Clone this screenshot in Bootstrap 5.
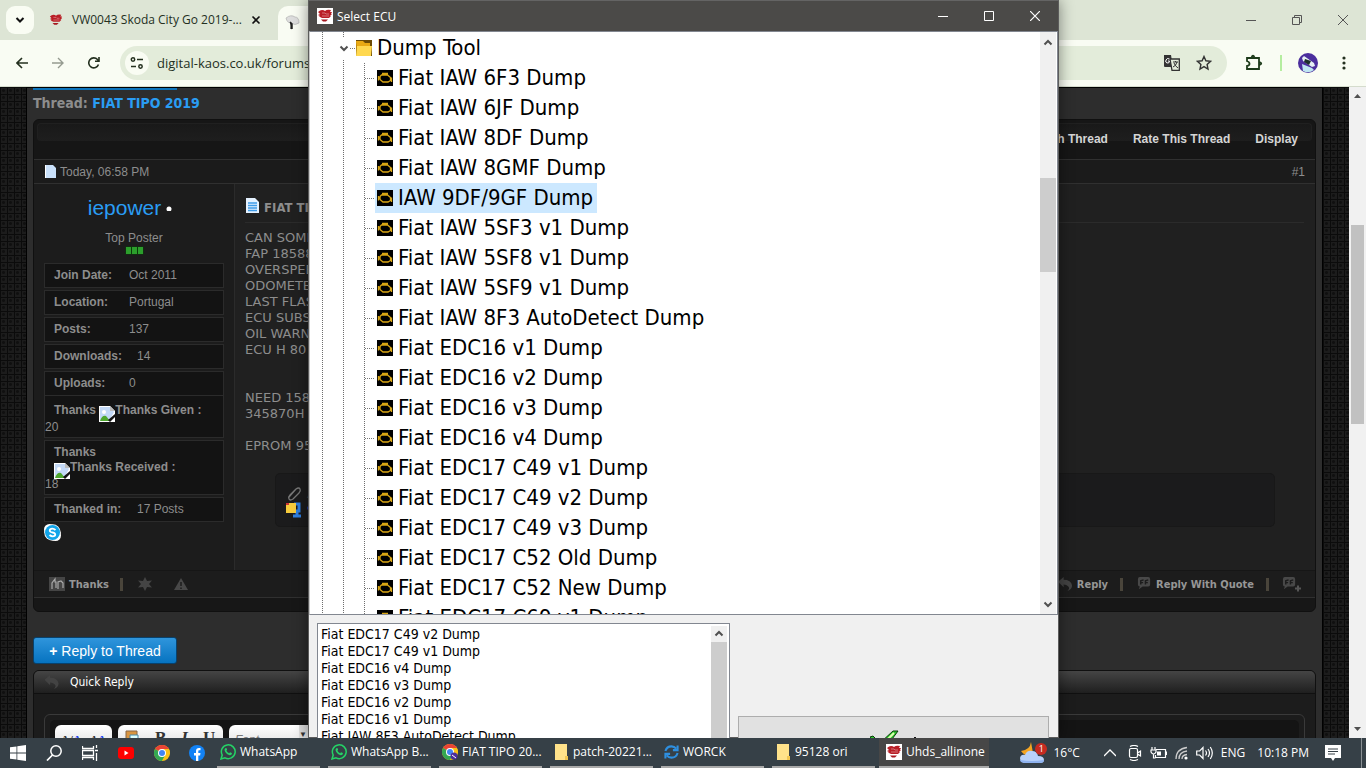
<!DOCTYPE html>
<html lang="en">
<head>
<meta charset="utf-8">
<meta name="viewport" content="width=device-width, initial-scale=1">
<title>FIAT TIPO 2019</title>
<link rel="stylesheet" href="https://cdn.jsdelivr.net/npm/bootstrap@5.3.0/dist/css/bootstrap.min.css">
<style>
:root{--ui:"Open Sans","Noto Sans",sans-serif;--tahoma:"DejaVu Sans Condensed","Noto Sans",sans-serif;--arial:"Liberation Sans",Arial,sans-serif}
body{height:100vh;overflow:hidden;font-family:var(--arial);font-size:12px;line-height:16px;color:#8d8d8d;background:#2e2e2e}
button{border:0;background:none;padding:0;color:inherit;font:inherit}
svg{flex:none;display:block}
a{text-decoration:none;color:inherit}
.desk{min-height:0}
/* browser */
.tabs{height:40px;background:#dde5d5;color:#24301f;font-family:var(--ui)}
.tab-menu{width:28px;height:28px;margin-left:6px;border-radius:9px;background:#f9fcf3}
.tab-a{width:240px;padding:0 12px 0 15px;gap:9px}
.tab-a span{width:170px;white-space:nowrap}
.tab-b{width:240px;height:34px;margin-left:4px;padding-left:7px;border-radius:10px 10px 0 0;background:#f9fcf3}
.win-ctl{width:46px;height:40px}
.bar{height:47px;background:#f9fcf3;color:#24301f;border-bottom:1px solid #d5dccd}
.omni{height:34px;border-radius:17px;background:#e3ecda;margin-left:20px;padding:0 15px 0 5px}
.omni input{border:0;background:none;outline:0;font:13px var(--ui);color:#24301f;padding:0;margin-left:8px}
.tune{width:24px;height:24px;border-radius:50%;background:#f9fcf3}
/* forum page */
.view{background:#121212;overflow:hidden}
.weave{background-color:#1c1c1c;background-image:linear-gradient(#0b0b0b 1px,transparent 1px),linear-gradient(90deg,#0b0b0b 1px,transparent 1px),radial-gradient(#101010 1px,transparent 2px);background-size:7px 7px;padding:0 26px}
.sheet{background:#2d2d2d;border:solid #000;border-width:1px 1px 0;height:100%;padding:0 6px}
.top-btn{width:144px;height:2px;background:#0d73bb}
.thread-h{font:bold 14px/18px var(--tahoma);margin:4px 0 7px}
.thread-h a,.blue{color:#2a9df4}
.panel{border:1px solid #101010;border-radius:6px;background:#171717;overflow:hidden}
.tools{height:40px;padding:3px 3px 0;background:#161616;border-bottom:1px solid #303030}
.tools-in{height:18px;line-height:30px;border-radius:4px;border:1px solid #202020;border-bottom:0;background:linear-gradient(#191919,#1e1e1e);gap:25px;padding-right:13px;color:#d5d5d5;font-weight:bold}
.date{height:24px;background:#1b1b1b;border-bottom:1px solid #303030;padding:0 10px 0 11px}
.post{height:386px;background:#1c1c1c}
.who{width:201px;border-right:1px solid #2b2b2b;padding:12px 10px 0}
.stat{border:1px solid #2b2b2b;background:#131313;height:25px;margin-bottom:2px;padding-left:9px;line-height:23px}
.stat b{display:inline-block;width:75px}
.stat.wide b{width:83px}
.stat.tall{height:auto;line-height:16px;padding:7px 0 2px}
.stat.tall b{width:auto;display:block;padding-left:9px;line-height:15px}
.stat.tall svg{display:inline-block;vertical-align:-5px;margin-bottom:-3px}
.msg{flex:1;background:#202020;padding:14px 11px 0 10px;font:13px/16px "DejaVu Sans",sans-serif;min-width:0}
.msg h2{font:bold 13px/20px var(--tahoma);margin:0 0 7px;padding-bottom:4px;border-bottom:1px solid #2b2b2b;white-space:nowrap}
.attach{height:54px;margin:19px 29px 0 30px;border:1px solid #181818;border-radius:5px;background:#1b1b1c;padding:12px 10px;white-space:nowrap}
.acts{height:28px;border-top:1px solid #161616;border-bottom:1px solid #303030;background:#1c1c1c;font:bold 11px/15px var(--tahoma);padding:0 13px 0 15px;color:#969696}
.sep{width:3px;height:13px;background:#4a453b}
.reply{width:144px;height:27px;margin:25px 0 6px;border:1px solid #07426e;border-radius:3px;background:linear-gradient(#2f95dc,#0673c0);color:#fff;font-size:14px}
.quick-h{height:23px;background:linear-gradient(#454545,#1f1f1f);border-bottom:1px solid #101010;color:#fff;font:12px/22px var(--tahoma)}
.quick{background:#1c1c1c;padding:20px 10px 0}
.editor{height:120px;border:1px solid #3a3a3a;border-radius:6px;padding:5px}
.editor>div{background:#141414;height:110px;border-radius:5px;padding:5px;gap:6px}
.grp{height:30px;border-radius:6px;background:linear-gradient(#fff,#d5d5d5);font-family:"Liberation Serif",serif;color:#333}
.grp input{width:70px;border:0;background:none;padding:0 0 0 6px;font:italic 12px var(--arial)}
.grp input::placeholder{color:#777}
.rail{width:17px;background:#f1f1f1}
.rail i{display:block;background:#c1c1c1;margin:0 2px}
/* dialog */
.dlg{position:absolute;left:308px;top:0;width:751px;height:100%;border:1px solid #5c5c5c;border-top-color:#646464;background:#f0f0f0;box-shadow:0 0 14px rgba(0,0,0,.45);color:#000;font-family:var(--tahoma)}
.cap{height:30px;background:#4b4a48;color:#fff;font:12px var(--ui)}
.cap button{width:46px;height:30px}
.tree{height:584px;border:1px solid #828790;border-left-color:#c8c8c8;background:#fff;padding-right:1px;overflow:hidden}
.guide{background:repeating-linear-gradient(#6e6e6e 0 1px,transparent 1px 2px) 6px 0/1px 100% no-repeat}
.twist{width:13px;height:22px;background:#fff}
.lead-dots{width:10px;height:1px;background:repeating-linear-gradient(90deg,#777 0 1px,transparent 1px 2px)}
.leaf,.branch{height:30px;font-size:22px;line-height:30px;white-space:nowrap}
.leaf span{display:flex;align-items:center;padding:0 4px 0 2px;gap:5px}
.leaf.sel span{background:#cce8ff}
.sb{width:16px;background:#f0f0f0}
.sb i{display:block;background:#cdcdcd}
.low{padding:8px 9px 0 8px;gap:8px}
.recent{width:413px;height:160px;border:1px solid #828790;background:#fff;padding:2px 2px 0 3px;font-size:14px;line-height:17px}
.ok{flex:1;height:56px;margin-top:93px;border:1px solid #adadad;background:#e1e1e1}
/* taskbar */
.task{height:30px;background:#364047;color:#fff;font:12px/28px var(--ui);position:relative}
.pin{width:36px;height:30px}
.app{width:103px;height:30px;margin-right:8px;padding-left:3px;gap:4px;border-bottom:2px solid #a9a9a9;white-space:nowrap}
.app.on{width:110px;background:#474747;padding-left:7px;margin:0 0 0 -4px}
.tray{gap:8px;padding-right:4px}
.tray .badge-n{left:16px;top:2px;width:12px;height:12px;border-radius:50%;background:#c62b20;font-size:9px;line-height:12px;text-align:center}
</style>
</head>
<body class="d-flex flex-column">
<svg width="0" height="0" class="position-absolute">
<symbol id="ecu" viewBox="0 0 16 16"><rect width="16" height="16" fill="#000"/><path d="M5 3.500h6M8 3.500v1.500M4.500 5h6l3 2.500v3L11 12H6l-3-2.500V6.500zM1.500 6v4.500M1.500 8H3M14.500 7.500V12" fill="none" stroke="#d9a614" stroke-width="1.300"/></symbol>
<symbol id="fan" viewBox="0 0 16 16"><path d="M1 4q2-2 4-2 2 0 3 1 2-2 6-1l-1 2h2l-1 2h1l-2 2h1l-2 2H5L3 9H2l1-1-2-1h2L1 6h2z" fill="#b91e26"/><path d="M4 11.500h7l-2 2H6z" fill="#a51820"/><path d="M5 5h3l1 1h3M5 8h7" fill="none" stroke="#f3c9c9" stroke-width=".5"/></symbol>
<symbol id="up" viewBox="0 0 10 10"><path d="M1.500 6.500L5 3l3.500 3.500" fill="none" stroke="#505050" stroke-width="2"/></symbol>
<symbol id="down" viewBox="0 0 10 10"><path d="M1.500 3.500L5 7l3.500-3.500" fill="none" stroke="#505050" stroke-width="2"/></symbol>
<symbol id="wa" viewBox="0 0 16 16"><path d="M1 15l1.200-4A6.900 6.900 0 1 1 5 13.800z" fill="none" stroke="#25d366" stroke-width="1.500"/><path d="M5.300 4.300q1-.8 1.400.2l.4 1q0 .4-.7 1.200 1 1.700 2.800 2.500l.8-.9q1.500.4 2 1-.2 2-2.200 1.900Q5.300 10 4.500 6q.1-1 .8-1.700" fill="#25d366"/></symbol>
<symbol id="chr" viewBox="0 0 16 16"><circle cx="8" cy="8" r="8" fill="#fbc116"/><path d="M8 8L1.070 4A8 8 0 0 1 14.930 4z" fill="#ea4335"/><path d="M8 8L1.070 4A8 8 0 0 0 8 16l3.500-6z" fill="#34a853"/><path d="M8 4h6.900q1.400 2.500 1 5L8 16l3.500-6z" fill="#fbc116"/><circle cx="8" cy="8" r="4" fill="#fff"/><circle cx="8" cy="8" r="3" fill="#4285f4"/></symbol>
<symbol id="fold" viewBox="0 0 16 16"><path d="M2 0h12v13l-2 3H2z" fill="#ffe28a"/><path d="M12 12h3v4h-3z" fill="#f1c550"/></symbol>
<symbol id="broken" viewBox="0 0 16 16"><path d="M0 0h11l5 5v11H0z" fill="#fff"/><path d="M1 1h10l4 5-5 9H1z" fill="#c3d9f7"/><path d="M1 15q2-6 6-5l4 5z" fill="#4ea72e"/><path d="M11 0v5h5z" fill="#bbb"/><path d="M9 14l7-6v3l-5 5z" fill="#131313"/><circle cx="5" cy="6" r="2" fill="#fff"/></symbol>
<symbol id="arrow" viewBox="0 0 16 16"><path d="M0 5l6-5v3q8 0 9 6 0 4-5 6 3-3 1-5-2-2-5-2v3z" fill="#434343"/></symbol>
<symbol id="quote" viewBox="0 0 16 16"><path d="M3 0h9q2 0 2 2v6q0 2-2 2H6l-4 3 1-3Q1 10 1 8V2q0-2 2-2z" fill="#484848"/><path d="M4 8V4l3-1M9 8V4l3-1M3.500 6h3M8.500 6h3" stroke="#1c1c1c" stroke-width="1.500" fill="none"/></symbol>
</svg>

<div class="desk flex-grow-1 position-relative overflow-hidden d-flex flex-column">
<header>
 <div class="tabs d-flex align-items-center">
  <button class="tab-menu d-grid" aria-label="Search tabs" style="place-items:center"><svg width="10" height="10" viewBox="0 0 10 10"><path d="M1.500 3L5 6.500 8.500 3" fill="none" stroke="#111" stroke-width="2"/></svg></button>
  <div class="tab-a d-flex align-items-center"><svg width="14" height="14"><use href="#fan"/></svg><span>VW0043 Skoda City Go 2019-...</span><button aria-label="Close tab"><svg width="10" height="10" viewBox="0 0 10 10"><path d="M1.500 1.500l7 7m0-7l-7 7" stroke="#111" stroke-width="1.600"/></svg></button></div>
  <div class="tab-b align-self-end d-flex align-items-center"><svg width="16" height="16" viewBox="0 0 16 16"><path d="M1 3Q6-1 10 2q4 0 4 6-4 3-8 0Q2 8 1 3z" fill="#ddd" stroke="#aaa" stroke-width=".6"/><path d="M5 7l2 2-1 5M7 9v5" stroke="#222" stroke-width="1.500"/></svg></div>
  <div class="ms-auto d-flex">
   <button class="win-ctl" aria-label="Minimise"><svg class="m-auto" width="10" height="10"><path d="M0 5.500h10" stroke="#555"/></svg></button>
   <button class="win-ctl" aria-label="Restore"><svg class="m-auto" width="10" height="10" viewBox="0 0 10 10"><path d="M.5 2.500h7v7h-7zM2.500 2.500v-2h7v7h-2" fill="none" stroke="#555"/></svg></button>
   <button class="win-ctl" aria-label="Close"><svg class="m-auto" width="10" height="10"><path d="M0 0l10 10M10 0L0 10" stroke="#555"/></svg></button>
  </div>
 </div>
 <div class="bar d-flex align-items-center">
  <button class="ms-3" aria-label="Back"><svg width="12" height="12" viewBox="0 0 12 12"><path d="M12 6H1M6 1L1 6l5 5" fill="none" stroke="#24301f" stroke-width="1.600"/></svg></button>
  <button class="ms-4" aria-label="Forward"><svg width="12" height="12" viewBox="0 0 12 12"><path d="M0 6h11M6 1l5 5-5 5" fill="none" stroke="#959b90" stroke-width="1.400"/></svg></button>
  <button class="ms-4" aria-label="Reload"><svg width="12" height="12" viewBox="0 0 12 12"><path d="M10.500 7.500A5 5 0 1 1 9.500 2.500l1.500 1.500M11 0v4.200H7" fill="none" stroke="#24301f" stroke-width="1.600"/></svg></button>
  <div class="omni flex-grow-1 d-flex align-items-center">
   <span class="tune d-grid" style="place-items:center"><svg width="14" height="12" viewBox="0 0 14 12"><path d="M7 2.500h6M1 9.500h5" stroke="#24301f" stroke-width="1.500"/><g fill="none" stroke="#24301f" stroke-width="1.500"><circle cx="3" cy="2.500" r="1.700"/><circle cx="10.500" cy="9.500" r="1.700"/></g></svg></span>
   <input class="flex-grow-1" aria-label="Address" value="digital-kaos.co.uk/forums">
   <button class="me-3" aria-label="Translate"><svg width="16" height="16" viewBox="0 0 16 16"><path d="M0 0h7l2 12H1q-1 0-1-1z" fill="#333"/><path d="M6 4h9.300v11.300H8z" fill="#e3ecda" stroke="#333" stroke-width="1.300"/><path d="M9 7h5M11.500 6v1M13 7q-1 4-4 5M10 8q1 3 4 5" stroke="#333" fill="none"/><path d="M5.500 4Q3 2.500 2 5t1 3q2.500.5 2.500-2H4" stroke="#fff" fill="none"/></svg></button>
   <button aria-label="Bookmark"><svg width="16" height="16" viewBox="0 0 16 16"><path d="M8 1.500l1.900 4.300 4.600.5-3.400 3.100.9 4.600-4-2.400-4 2.400.9-4.600L1.500 6.300l4.600-.5z" fill="none" stroke="#333" stroke-width="1.400"/></svg></button>
  </div>
  <button aria-label="Extensions" style="margin-left:18px"><svg width="18" height="18" viewBox="0 0 18 18"><path d="M2 4h12v11H2v-3q2.500-.5 2.500-2.300T2 7zM6.500 3.500Q8 0 9.500 3.500M14.500 8Q18 9.500 14.500 11" fill="none" stroke="#1d3b1a" stroke-width="1.800"/></svg></button>
  <span style="width:2px;height:16px;background:#b5eda0;margin-left:17px"></span>
  <button aria-label="Profile" style="margin-left:16px"><svg width="20" height="20" viewBox="0 0 20 20"><circle cx="10" cy="10" r="10" fill="#4b2e9d"/><path d="M4 5l2-2 10 7 1 3-3 1-9-6z" fill="#e6eff5"/><path d="M7 6l6 2-2 4-5-3z" fill="#1d2f2b"/><path d="M4 11l10 4 2 2a10 10 0 0 1-11 1z" fill="#bfe6f2"/></svg></button>
  <button aria-label="Menu" style="margin:0 20px 0 24px"><svg width="4" height="16" viewBox="0 0 4 16" fill="#24301f"><circle cx="2" cy="3" r="1.600"/><circle cx="2" cy="8" r="1.600"/><circle cx="2" cy="13" r="1.600"/></svg></button>
 </div>
</header>

<div class="view d-flex flex-grow-1">
 <div class="weave flex-grow-1"><main class="sheet">
  <div class="top-btn"></div>
  <h1 class="thread-h">Thread: <a href="#">FIAT TIPO 2019</a></h1>
  <section class="panel">
   <div class="tools"><nav class="tools-in d-flex justify-content-end"><a href="#">Search Thread</a><a href="#">Rate This Thread</a><a href="#">Display</a></nav></div>
   <div class="date d-flex align-items-center justify-content-between"><span class="d-flex align-items-center"><svg class="me-1" width="11" height="13" viewBox="0 0 11 13"><path d="M0 0h8l3 3v10H0z" fill="#c9e0fa"/><path d="M0 0h1v13H0z" fill="#fff"/></svg>Today, 06:58 PM</span><a href="#">#1</a></div>
   <article class="post d-flex">
    <aside class="who">
     <div class="d-flex align-items-center justify-content-center" style="gap:5px;padding-right:8px"><a href="#" class="blue" style="font-size:21px;line-height:24px">iepower</a><svg width="6" height="6"><circle cx="3" cy="4" r="2.500" fill="#fff"/></svg></div>
     <div class="text-center" style="margin-top:10px">Top Poster</div>
     <div class="d-flex justify-content-center" style="height:17px;padding-bottom:8px"><svg width="19" height="9"><path d="M.5.5h18v8H.5z" fill="#0b3a0b"/><path d="M1 1h5v7H1zM7 1h5v7H7zM13 1h5v7h-5z" fill="#2c9f2c"/></svg></div>
     <div class="stat">&#8203;<b>Join Date:</b>Oct 2011</div>
     <div class="stat"><b>Location:</b>Portugal</div>
     <div class="stat"><b>Posts:</b>137</div>
     <div class="stat wide"><b>Downloads:</b>14</div>
     <div class="stat"><b>Uploads:</b>0</div>
     <div class="stat tall" style="margin-top:-3px"><b>Thanks <svg width="16" height="16"><use href="#broken"/></svg>Thanks Given :</b>20</div>
     <div class="stat tall" style="padding-top:4px"><b>Thanks<br><svg width="16" height="16"><use href="#broken"/></svg>Thanks Received :</b>18</div>
     <div class="stat wide"><b>Thanked in:</b>17 Posts</div>
     <svg width="17" height="17" viewBox="0 0 17 17"><circle cx="5.500" cy="5.500" r="5.500" fill="#fff"/><circle cx="11.500" cy="11.500" r="5.500" fill="#fff"/><circle cx="8.500" cy="8.500" r="8.300" fill="#fff"/><circle cx="8.500" cy="8.500" r="7.500" fill="#12a5ea"/><path d="M11.500 6Q8.500 3.500 6 5.500 5 8 8.500 8.500q3.500.8 2.500 3-2.500 2-5.500-.5" fill="none" stroke="#fff" stroke-width="1.900"/></svg>
    </aside>
    <div class="msg">
     <h2><svg class="d-inline-block" width="15" height="16" viewBox="0 0 15 16" style="vertical-align:-2px"><path d="M1 0h9l4 4v11H1z" fill="#e4f1ff"/><path d="M3 5h9M3 7.500h9M3 10h9M3 12.500h9" stroke="#3d9be8" stroke-width="1.400"/></svg> FIAT TIPO 2019</h2>
     CAN SOME<br>FAP 18588<br>OVERSPEE<br>ODOMETER<br>LAST FLASH<br>ECU SUBS<br>OIL WARN<br>ECU H 80<br><br><br>NEED 158<br>345870H<br><br>EPROM 95
     <div class="attach"><div class="d-flex"><svg width="17" height="16" viewBox="0 0 17 16"><path d="M3 11l7-8q3-2 4 0t-1 4l-6 6q-3 2-4 0t1-4l5-5" fill="none" stroke="#777" stroke-width="1.300"/></svg><span class="ms-1" style="color:#444">Attached</span></div><div class="d-flex"><svg width="17" height="16" viewBox="0 0 17 16"><path d="M8 2h5v7h-2v5M7 14h8" fill="none" stroke="#2f7fe0" stroke-width="3"/><path d="M0 1h10v10H0z" fill="#f6cb3c"/><path d="M0 1h3v2H0z" fill="#c33"/></svg><span class="blue ms-1">95128</span></div></div>
    </div>
   </article>
   <div class="acts d-flex align-items-center">
    <a href="#" class="d-flex"><svg class="me-1" width="16" height="14" viewBox="0 0 16 14"><rect width="16" height="14" fill="#454545"/><path d="M3 12V6l3-4v3h1v6M9 12V5l3-1 2 2v5" fill="none" stroke="#aaa" stroke-width="1.200"/></svg>Thanks</a><span class="sep" style="margin:0 15px 0 11px"></span>
    <svg width="14" height="14" viewBox="0 0 14 14"><path d="M7 0l2 4 5-.5L11 7l3 3.500L9 10l-2 4-2-4-5 .5L3 7 0 3.500 5 4z" fill="#444"/></svg>
    <svg style="margin-left:22px" width="14" height="13" viewBox="0 0 14 13"><path d="M7 0l7 12H0z" fill="#484848"/><path d="M7 4v4M7 9.500V11" stroke="#1c1c1c" stroke-width="1.500"/></svg>
    <a href="#" class="d-flex ms-auto"><svg class="me-1" width="15" height="15"><use href="#arrow"/></svg>Reply</a><span class="sep" style="margin:0 14px 0 12px"></span>
    <a href="#" class="d-flex"><svg class="me-1" width="15" height="15"><use href="#quote"/></svg>Reply With Quote</a><span class="sep" style="margin:0 13px 0 12px"></span>
    <svg width="20" height="15" viewBox="0 0 20 15"><use href="#quote" width="15" height="15"/><path d="M13 11.500h6M16 8.500v6" stroke="#555" stroke-width="2"/></svg>
   </div>
   <div style="height:13px"></div>
  </section>
  <button class="reply d-block"><b>+</b> Reply to Thread</button>
  <section class="panel">
   <div class="quick-h d-flex align-items-center"><svg class="ms-2 me-2" width="20" height="15" viewBox="0 0 16 16"><use href="#arrow"/></svg>Quick Reply</div>
   <div class="quick"><div class="editor"><div class="d-flex">
    <span class="grp d-flex justify-content-center gap-2 fw-bold" style="width:57px"><button>A/<span style="color:#24e">A</span></button><button><i>A</i><span style="color:#24e">A</span></button></span>
    <span class="grp d-flex align-items-start" style="width:105px;font:bold 17px/26px 'Liberation Serif',serif;padding-left:7px;gap:15px"><svg class="mt-1" width="15" height="16" viewBox="0 0 15 16"><path d="M1 2h11v13H1z" fill="#d99540" stroke="#864"/><path d="M5 6h8v9H5z" fill="#dff" stroke="#48a"/></svg><button>B</button><button><i>I</i></button><button>U</button></span>
    <span class="grp d-flex"><input placeholder="Font" aria-label="Font"><span style="width:30px;background:#ddd;font-size:8px;line-height:20px">&#9660;</span></span>
   </div></div></div>
  </section>
 </main></div>
 <div class="rail d-flex flex-column"><svg class="mx-auto" width="9" height="17"><path d="M1 11h7L4.500 7z" fill="#505050"/></svg><i style="height:199px;margin-top:121px"></i><svg class="mx-auto mt-auto" width="9" height="17"><path d="M1 6h7l-3.500 4z" fill="#505050"/></svg></div>
</div>

<section class="dlg d-flex flex-column" role="dialog" aria-label="Select ECU">
 <div class="cap d-flex align-items-center"><svg class="ms-2 bg-white" width="16" height="16"><use href="#fan"/></svg><span class="ms-1 me-auto">Select ECU</span>
  <button aria-label="Minimise"><svg class="m-auto" width="10" height="10"><path d="M0 5.500h10" stroke="#fff"/></svg></button><button aria-label="Maximise"><svg class="m-auto" width="10" height="10"><path d="M.5.5h9v9h-9z" fill="none" stroke="#fff"/></svg></button><button aria-label="Close"><svg class="m-auto" width="10" height="10"><path d="M0 0l10 10M10 0L0 10" stroke="#fff" stroke-width="1.200"/></svg></button></div>
 <div class="tree d-flex flex-shrink-0">
  <div class="guide flex-grow-1" style="margin-left:6px;padding-left:21px"><div class="guide" style="padding-top:1px">
   <div class="branch d-flex align-items-center"><button class="twist d-grid" aria-label="Collapse" style="place-items:center"><svg width="10" height="10"><use href="#down"/></svg></button><span class="lead-dots" style="width:6px"></span><svg width="16" height="16" viewBox="0 0 16 16"><path d="M0 0h16v16H0z" fill="#6b4a05"/><path d="M0 1h7l2 2h5v12H1z" fill="#e9a913"/><path d="M1 6h15l-1 10H0z" fill="#ffd84f"/></svg><span style="margin-left:5px">Dump Tool</span></div>
   <div class="guide" style="margin-left:21px;padding-left:7px">
    <div class="leaf d-flex align-items-center"><i class="lead-dots"></i><span><svg width="16" height="16"><use href="#ecu"/></svg>Fiat IAW 6F3 Dump</span></div>
    <div class="leaf d-flex align-items-center"><i class="lead-dots"></i><span><svg width="16" height="16"><use href="#ecu"/></svg>Fiat IAW 6JF Dump</span></div>
    <div class="leaf d-flex align-items-center"><i class="lead-dots"></i><span><svg width="16" height="16"><use href="#ecu"/></svg>Fiat IAW 8DF Dump</span></div>
    <div class="leaf d-flex align-items-center"><i class="lead-dots"></i><span><svg width="16" height="16"><use href="#ecu"/></svg>Fiat IAW 8GMF Dump</span></div>
    <div class="leaf sel d-flex align-items-center"><i class="lead-dots"></i><span><svg width="16" height="16"><use href="#ecu"/></svg>IAW 9DF/9GF Dump</span></div>
    <div class="leaf d-flex align-items-center"><i class="lead-dots"></i><span><svg width="16" height="16"><use href="#ecu"/></svg>Fiat IAW 5SF3 v1 Dump</span></div>
    <div class="leaf d-flex align-items-center"><i class="lead-dots"></i><span><svg width="16" height="16"><use href="#ecu"/></svg>Fiat IAW 5SF8 v1 Dump</span></div>
    <div class="leaf d-flex align-items-center"><i class="lead-dots"></i><span><svg width="16" height="16"><use href="#ecu"/></svg>Fiat IAW 5SF9 v1 Dump</span></div>
    <div class="leaf d-flex align-items-center"><i class="lead-dots"></i><span><svg width="16" height="16"><use href="#ecu"/></svg>Fiat IAW 8F3 AutoDetect Dump</span></div>
    <div class="leaf d-flex align-items-center"><i class="lead-dots"></i><span><svg width="16" height="16"><use href="#ecu"/></svg>Fiat EDC16 v1 Dump</span></div>
    <div class="leaf d-flex align-items-center"><i class="lead-dots"></i><span><svg width="16" height="16"><use href="#ecu"/></svg>Fiat EDC16 v2 Dump</span></div>
    <div class="leaf d-flex align-items-center"><i class="lead-dots"></i><span><svg width="16" height="16"><use href="#ecu"/></svg>Fiat EDC16 v3 Dump</span></div>
    <div class="leaf d-flex align-items-center"><i class="lead-dots"></i><span><svg width="16" height="16"><use href="#ecu"/></svg>Fiat EDC16 v4 Dump</span></div>
    <div class="leaf d-flex align-items-center"><i class="lead-dots"></i><span><svg width="16" height="16"><use href="#ecu"/></svg>Fiat EDC17 C49 v1 Dump</span></div>
    <div class="leaf d-flex align-items-center"><i class="lead-dots"></i><span><svg width="16" height="16"><use href="#ecu"/></svg>Fiat EDC17 C49 v2 Dump</span></div>
    <div class="leaf d-flex align-items-center"><i class="lead-dots"></i><span><svg width="16" height="16"><use href="#ecu"/></svg>Fiat EDC17 C49 v3 Dump</span></div>
    <div class="leaf d-flex align-items-center"><i class="lead-dots"></i><span><svg width="16" height="16"><use href="#ecu"/></svg>Fiat EDC17 C52 Old Dump</span></div>
    <div class="leaf d-flex align-items-center"><i class="lead-dots"></i><span><svg width="16" height="16"><use href="#ecu"/></svg>Fiat EDC17 C52 New Dump</span></div>
    <div class="leaf d-flex align-items-center"><i class="lead-dots"></i><span><svg width="16" height="16"><use href="#ecu"/></svg>Fiat EDC17 C69 v1 Dump</span></div>
   </div></div></div>
  <div class="sb d-flex flex-column align-items-center"><svg class="mt-1" width="10" height="14"><use href="#up"/></svg><i class="w-100" style="height:94px;margin-top:128px"></i><svg class="mt-auto mb-1" width="10" height="12"><use href="#down"/></svg></div>
 </div>
 <div class="low d-flex align-items-start">
  <div class="recent d-flex justify-content-between flex-shrink-0"><div>Fiat EDC17 C49 v2 Dump<br>Fiat EDC17 C49 v1 Dump<br>Fiat EDC16 v4 Dump<br>Fiat EDC16 v3 Dump<br>Fiat EDC16 v2 Dump<br>Fiat EDC16 v1 Dump<br>Fiat IAW 8F3 AutoDetect Dump</div><div class="sb"><svg class="m-auto" width="10" height="16"><use href="#up"/></svg><i style="height:140px"></i></div></div>
  <button class="ok d-flex justify-content-center align-items-start" aria-label="Select" style="padding-top:13px"><svg width="48" height="32" viewBox="0 0 48 32"><path d="M0 7l3-1 7 7L23 1h5L11 24z" fill="#2fc52f" stroke="#063b06"/><path d="M24 3l-7 7" stroke="#dfffb0" stroke-width="2"/><path d="M44 7h2v2h-2z" fill="#111"/></svg></button>
 </div>
</section>
</div>

<footer class="task d-flex align-items-center flex-shrink-0">
 <button class="pin" aria-label="Start"><svg class="m-auto" width="16" height="16" viewBox="0 0 16 16" fill="#fff"><path d="M0 2.300L6.500 1.400v6.200H0zM7.300 1.300L16 0v7.600H7.300zM0 8.400h6.500v6.200L0 13.700zM7.300 8.400H16V16l-8.700-1.300z"/></svg></button>
 <button class="pin" aria-label="Search"><svg class="m-auto" width="16" height="16" viewBox="0 0 16 16"><circle cx="10" cy="6" r="5.200" fill="none" stroke="#fff" stroke-width="1.500"/><path d="M6.500 10L1 15.500" stroke="#fff" stroke-width="1.700"/></svg></button>
 <button class="pin" aria-label="Task view"><svg class="m-auto" width="16" height="16" viewBox="0 0 16 16"><path d="M.5 1v2.500h11V1M.5 15v-2.500h11V15M.5 5.500h11v5H.5zM14.500 0v3M14.500 8v8M13 5.500h3" fill="none" stroke="#fff" stroke-width="1.300"/></svg></button>
 <button class="pin" aria-label="YouTube"><svg class="m-auto" width="16" height="12" viewBox="0 0 16 12"><rect width="16" height="12" rx="3" fill="#f00"/><path d="M6.500 3.500v5l4-2.500z" fill="#fff"/></svg></button>
 <button class="pin" aria-label="Chrome"><svg class="m-auto" width="16" height="16"><use href="#chr"/></svg></button>
 <button class="pin me-1" style="width:33px" aria-label="Facebook"><svg class="m-auto" width="16" height="16" viewBox="0 0 16 16"><circle cx="8" cy="8" r="8" fill="#1282f5"/><path d="M7 16v-5.500H5V8h2V6q0-3 3-3h1.500v2.200H10Q9.300 5.200 9.300 6v2h2.200l-.4 2.500H9.300V16z" fill="#fff"/></svg></button>
 <button class="app d-flex align-items-center"><svg width="16" height="16"><use href="#wa"/></svg>WhatsApp</button>
 <button class="app d-flex align-items-center"><svg width="16" height="16"><use href="#wa"/></svg>WhatsApp B...</button>
 <button class="app d-flex align-items-center"><svg width="16" height="16"><use href="#chr"/><circle cx="12" cy="12" r="3.500" fill="#4b2e9d"/><path d="M10 11l4 3" stroke="#fff"/></svg>FIAT TIPO 20...</button>
 <button class="app d-flex align-items-center"><svg width="16" height="16"><use href="#fold"/></svg>patch-20221...</button>
 <button class="app d-flex align-items-center"><svg width="15" height="16" viewBox="0 0 16 16"><path d="M1.500 7Q3 2 8 2q3 0 5 2.500M14.500 9Q13 14 8 14q-3 0-5-2.500M14.500 1v5h-5M1.500 15v-5h5" fill="none" stroke="#2e8fe0" stroke-width="2.200"/></svg>WORCK</button>
 <button class="app d-flex align-items-center"><svg width="16" height="16"><use href="#fold"/></svg>95128 ori</button>
 <button class="app on d-flex align-items-center"><svg class="bg-white" width="16" height="16"><use href="#fan"/></svg>Uhds_allinone</button>
 <div class="tray ms-auto d-flex align-items-center">
  <span class="position-relative"><svg width="26" height="24" viewBox="0 0 26 24"><path d="M12 1q-1 8-10 9 6 8 12 2z" fill="#f6a623"/><path d="M7 22q-6 0-6-5 1-4 5-3 2-5 7-4 5 0 6 5 6 0 6 4 0 3-4 3z" fill="#b9d2fa"/><path d="M7 22q-6 0-6-3 12 2 24 0 0 3-4 3z" fill="#8fb2ef"/></svg><span class="badge-n position-absolute">1</span></span>
  <span class="me-3">16°C</span>
  <svg style="margin-right:4px" width="12" height="8" viewBox="0 0 12 8"><path d="M0 7l6-6 6 6" fill="none" stroke="#fff" stroke-width="1.300"/></svg>
  <svg width="14" height="16" viewBox="0 0 14 16"><path d="M2 1.500q4-2 8 0M2 14.500q4 2 8 0M1.500 5q0-1.500 1.500-1.500h5q1.500 0 1.500 1.500v6q0 1.500-1.500 1.500H3Q1.500 12.500 1.500 11zM9.500 8l3-2v5l-3-2" fill="none" stroke="#fff" stroke-width="1.200"/></svg>
  <svg width="17" height="14" viewBox="0 0 17 14"><path d="M6 3.500h9.500v8H5.500V9M15.500 6h1v3M2 1v3M5 1v3M1 4h5v2Q5 8 3.500 8T1 6zM3.500 8v4h2" fill="none" stroke="#fff" stroke-width="1.200"/><path d="M7 5.500h4v4H7z" fill="#fff"/></svg>
  <svg width="13" height="14" viewBox="0 0 13 14"><path d="M1 13Q1 3 12 1.500M4 13q0-7 8-8M7 13q0-4 5-4.500" fill="none" stroke="#ccc" stroke-width="1.300"/><circle cx="11" cy="12" r="1.600" fill="#fff"/></svg>
  <svg width="17" height="14" viewBox="0 0 17 14"><path d="M.7 5h3L7 1.500v11L3.700 9h-3zM9.500 4.500q2 2.500 0 5M12 3q3 4 0 8M14.300 1q4 6 0 12" fill="none" stroke="#fff" stroke-width="1.200"/></svg>
  <span>ENG</span><span class="ms-1">10:18 PM</span>
  <svg class="ms-2" width="16" height="16" viewBox="0 0 16 16"><path d="M0 0h16v13h-6l-2 3-2-3H0z" fill="#fff"/><path d="M3 4h10M3 6.500h10M3 9h7" stroke="#364047"/></svg>
  <span style="width:1px;height:30px;background:#8a9094;margin-left:12px"></span>
 </div>
</footer>
<script src="https://cdn.jsdelivr.net/npm/bootstrap@5.3.0/dist/js/bootstrap.bundle.min.js"></script>
</body>
</html>
